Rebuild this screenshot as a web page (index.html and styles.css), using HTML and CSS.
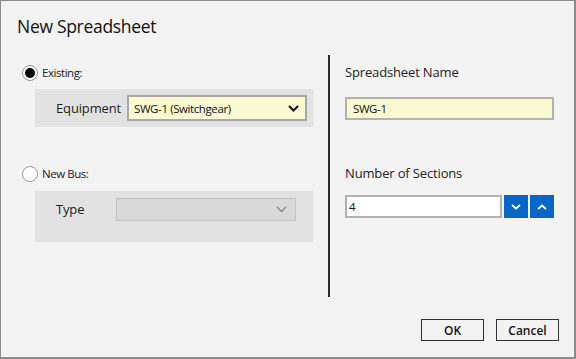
FILE: index.html
```
<!DOCTYPE html>
<html lang="en">
<head>
  <meta charset="UTF-8" />
  <title>New Spreadsheet</title>
  <link rel="stylesheet" href="styles.css">
</head>
<body>
  <div class="dialog">
    <h1>New Spreadsheet</h1>
    <main>
      <section class="left-contents">
        <label class="radio-row">
          <span class="radio checked"></span>
          <span>Existing:</span>
        </label>
        <div class="panel panel-existing">
          <span class="field-label">Equipment</span>
          <div class="select">
            <span>SWG-1 (Switchgear)</span>
            <svg width="11" height="7" viewBox="0 0 11 7"><path d="M1 1 L5.5 5.5 L10 1" fill="none" stroke="#111" stroke-width="2"/></svg>
          </div>
        </div>
        <label class="radio-row radio-row-second">
          <span class="radio"></span>
          <span>New Bus:</span>
        </label>
        <div class="panel panel-new">
          <span class="field-label type-label">Type</span>
          <div class="select disabled">
            <svg width="11" height="7" viewBox="0 0 11 7"><path d="M1 1 L5.5 5.5 L10 1" fill="none" stroke="#888" stroke-width="1.4"/></svg>
          </div>
        </div>
      </section>
      <div class="separator"></div>
      <section class="right-contents">
        <div class="section-label">Spreadsheet Name</div>
        <div class="text-input name-input">SWG-1</div>
        <div class="section-label sections-label">Number of Sections</div>
        <div class="spin-row">
          <div class="text-input number-input">4</div>
          <button class="spin-btn">
            <svg width="10" height="6" viewBox="0 0 10 6"><path d="M1 1 L5 4.5 L9 1" fill="none" stroke="#fff" stroke-width="1.8"/></svg>
          </button>
          <button class="spin-btn">
            <svg width="10" height="6" viewBox="0 0 10 6"><path d="M1 5 L5 1.5 L9 5" fill="none" stroke="#fff" stroke-width="1.8"/></svg>
          </button>
        </div>
      </section>
    </main>
    <footer>
      <button class="action-btn">OK</button>
      <button class="action-btn">Cancel</button>
    </footer>
  </div>
</body>
</html>
```

FILE: styles.css
```
* {
  box-sizing: border-box;
  font-family: "Open Sans", "Noto Sans", sans-serif;
}

body {
  margin: 0;
  padding: 0;
  background-color: #f3f3f3;
}

.dialog {
  width: 576px;
  height: 359px;
  background-color: #f3f3f3;
  border-top: 1px solid #8c8c8c;
  border-left: 1px solid #8c8c8c;
  border-right: 2px solid #8c8c8c;
  border-bottom: 2px solid #8c8c8c;
  display: flex;
  flex-direction: column;
}

h1 {
  margin: 0;
  height: 54px;
  padding: 12px 0 0 16px;
  font-size: 17.5px;
  font-weight: normal;
  letter-spacing: -0.3px;
  line-height: 26px;
  color: #111;
}

main {
  display: flex;
  flex-direction: row;
  padding-left: 21px;
}

.left-contents {
  width: 291px;
  margin-right: 15px;
}

.radio-row {
  display: flex;
  align-items: center;
  gap: 4px;
  height: 21px;
  margin-top: 7px;
  font-size: 11.5px;
  color: #222;
  letter-spacing: -0.45px;
}

.radio-row-second {
  margin-top: 36px;
}

.radio {
  width: 16px;
  height: 16px;
  border-radius: 50%;
  border: 1px solid #9a9a9a;
  background-color: #fff;
  position: relative;
}

.radio.checked::after {
  content: "";
  position: absolute;
  left: 2px;
  top: 2px;
  width: 10px;
  height: 10px;
  border-radius: 50%;
  background-color: #000;
}

.panel {
  margin-left: 13px;
  background-color: #e2e2e2;
  display: flex;
  padding-left: 21px;
}

.panel-existing {
  margin-top: 6px;
  height: 38px;
  align-items: center;
  padding-right: 6px;
  justify-content: space-between;
}

.panel-new {
  margin-top: 7px;
  height: 51px;
  padding-top: 7px;
  align-items: flex-start;
}

.field-label {
  font-size: 13px;
  letter-spacing: -0.15px;
  color: #222;
}

.type-label {
  width: 60px;
  line-height: 23px;
}

.select {
  width: 180px;
  height: 26px;
  background-color: #fafad2;
  border: 2px solid #a9a9a9;
  display: flex;
  align-items: center;
  justify-content: space-between;
  padding: 0 6px 0 5px;
  font-size: 11.5px;
  color: #111;
  letter-spacing: -0.4px;
}

.select.disabled {
  height: 23px;
  background-color: #d9d9d9;
  border: 1px solid #c2c2c2;
  justify-content: flex-end;
  padding-right: 8px;
}

.separator {
  width: 2px;
  height: 242px;
  background-color: #2a2a2a;
}

.right-contents {
  width: 209px;
  margin-left: 15px;
}

.section-label {
  margin-top: 7px;
  height: 21px;
  line-height: 21px;
  font-size: 13px;
  letter-spacing: -0.15px;
  color: #222;
}

.sections-label {
  margin-top: 43px;
}

.text-input {
  height: 23px;
  border: 2px solid #b2b2b2;
  font-size: 11.5px;
  line-height: 19px;
  color: #111;
  letter-spacing: -0.4px;
}

.name-input {
  margin-top: 14px;
  background-color: #fafad2;
  padding-left: 6px;
}

.spin-row {
  margin-top: 11px;
  display: flex;
  gap: 2px;
}

.number-input {
  width: 157px;
  background-color: #fff;
  padding-left: 2px;
}

.spin-btn {
  width: 24px;
  height: 23px;
  border: none;
  padding: 0;
  background-color: #0866c6;
  display: flex;
  align-items: center;
  justify-content: center;
}

footer {
  margin-top: 22px;
  display: flex;
  justify-content: flex-end;
  gap: 12px;
  padding-right: 15px;
}

.action-btn {
  width: 63px;
  height: 22px;
  border: 1px solid #333;
  background-color: #f3f3f3;
  font-size: 12px;
  font-weight: 600;
  color: #111;
  padding: 0;
}
```
